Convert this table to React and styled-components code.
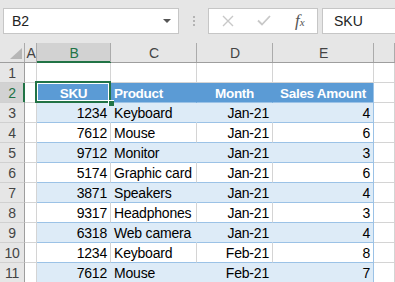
import styled, { createGlobalStyle, css } from "styled-components"

const GlobalStyle = createGlobalStyle`
  html, body {
    margin: 0;
    padding: 0;
    background: #e6e6e6;
    overflow: hidden;
  }
  body {
    font-family: "Liberation Sans", Arial, sans-serif;
  }
`

const Window = styled.div`
  width: 395px;
  height: 282px;
  overflow: hidden;
  background: #e6e6e6;
`

const FormulaBar = styled.div`
  display: flex;
  align-items: center;
  height: 43px;
  padding: 0 0 0 3px;
  box-sizing: border-box;
`

const NameBox = styled.div`
  display: flex;
  align-items: center;
  justify-content: space-between;
  width: 176px;
  height: 26px;
  margin-top: -2px;
  box-sizing: border-box;
  background: #fff;
  border: 1px solid #c6c6c6;
  padding: 0 7px 0 8px;
  font-size: 14px;
  color: #222;
`

const Caret = styled.span`
  width: 0;
  height: 0;
  border-left: 4px solid transparent;
  border-right: 4px solid transparent;
  border-top: 4px solid #555;
`

const Dots = styled.div`
  display: flex;
  flex-direction: column;
  gap: 2px;
  margin: -2px 13px 0 14px;
  span {
    width: 2px;
    height: 2px;
    background: #b4b4b4;
  }
`

const ActionBox = styled.div`
  display: flex;
  align-items: center;
  width: 110px;
  height: 26px;
  margin-top: -2px;
  box-sizing: border-box;
  background: #fff;
  border: 1px solid #c6c6c6;
  padding-left: 13px;
  gap: 23px;
`

const Fx = styled.span`
  font-family: "Liberation Serif", "Times New Roman", serif;
  font-style: italic;
  font-size: 17px;
  color: #555;
  margin-left: 1px;
  sub {
    font-size: 11px;
    vertical-align: 0;
  }
`

const FormulaInput = styled.div`
  flex: 1;
  height: 26px;
  margin: -2px 0 0 4px;
  box-sizing: border-box;
  background: #fff;
  border: 1px solid #c6c6c6;
  border-right: none;
  padding-left: 11px;
  display: flex;
  align-items: center;
  font-size: 14px;
  color: #222;
`

const Sheet = styled.div`
  display: grid;
  grid-template-columns: 25px 12px 74px 86px 76px 101px 1fr;
  grid-auto-rows: 20px;
  font-size: 14px;
  letter-spacing: -0.2px;
`

const Cell = styled.div`
  box-sizing: border-box;
  display: flex;
  align-items: center;
  padding: 1px 3px 0;
  white-space: nowrap;
  overflow: visible;
  background: #fff;
  color: #000;
  border-right: 1px solid #d4d4d4;
  border-bottom: 1px solid #d4d4d4;
  justify-content: ${p => p.$align === "right" ? "flex-end" : p.$align === "center" ? "center" : "flex-start"};
  ${p => p.$band === "head" && css`
    background: #5b9bd5;
    color: #fff;
    font-weight: bold;
    font-size: 13.5px;
    letter-spacing: -0.3px;
    border-right-color: #5b9bd5;
    border-bottom-color: #9bc2e6;
  `}
  ${p => p.$band === "odd" && css`
    background: #ddebf7;
    border-right-color: #ddebf7;
    border-bottom-color: #9bc2e6;
  `}
  ${p => p.$band === "even" && css`
    border-bottom-color: #9bc2e6;
  `}
  ${p => p.$last && css`
    border-right-color: #9bc2e6;
  `}
  ${p => p.$selected && css`
    position: relative;
    &::before {
      content: "";
      position: absolute;
      left: -2px;
      top: -2px;
      right: -1px;
      bottom: -1px;
      border: 2px solid #217346;
      box-shadow: inset 0 0 0 1px #fff;
      z-index: 2;
    }
    &::after {
      content: "";
      position: absolute;
      right: -4px;
      bottom: -4px;
      width: 5px;
      height: 5px;
      background: #217346;
      border: 1px solid #fff;
      border-right: none;
      border-bottom: none;
      z-index: 3;
    }
  `}
`

const ColHead = styled.div`
  box-sizing: border-box;
  display: flex;
  align-items: center;
  justify-content: center;
  padding-top: 1px;
  background: ${p => p.$active ? "#d2d2d2" : "#e6e6e6"};
  border-bottom: 1px solid ${p => p.$active ? "#217346" : "#9e9e9e"};
  box-shadow: ${p => p.$active ? "inset 0 -1px 0 #217346" : "none"};
  position: relative;
  color: ${p => p.$active ? "#217346" : "#444"};
  &::after {
    content: "";
    position: absolute;
    right: 0;
    top: 0;
    bottom: 0;
    width: 1px;
    background: #ababab;
  }
`

const Corner = styled(ColHead)`
  &::before {
    content: "";
    position: absolute;
    right: 3px;
    bottom: 3px;
    width: 0;
    height: 0;
    border-left: 12px solid transparent;
    border-bottom: 11px solid #b6b6b6;
  }
`

const RowHead = styled.div`
  box-sizing: border-box;
  display: flex;
  align-items: center;
  justify-content: center;
  padding-top: 1px;
  background: ${p => p.$active ? "#d2d2d2" : "#e6e6e6"};
  color: ${p => p.$active ? "#217346" : "#444"};
  border-bottom: 1px solid #d0d0d0;
  border-right: 1px solid ${p => p.$active ? "#217346" : "#9e9e9e"};
  box-shadow: ${p => p.$active ? "inset -1px 0 0 #217346" : "none"};
`

const rows = [
  ["1234", "Keyboard", "Jan-21", "4"],
  ["7612", "Mouse", "Jan-21", "6"],
  ["9712", "Monitor", "Jan-21", "3"],
  ["5174", "Graphic card", "Jan-21", "6"],
  ["3871", "Speakers", "Jan-21", "4"],
  ["9317", "Headphones", "Jan-21", "3"],
  ["6318", "Web camera", "Jan-21", "4"],
  ["1234", "Keyboard", "Feb-21", "8"],
  ["7612", "Mouse", "Feb-21", "7"],
]

const XIcon = () => (
  <svg width="12" height="12" viewBox="0 0 12 12">
    <path d="M1 1 L11 11 M11 1 L1 11" stroke="#c8c8c8" strokeWidth="1.4" fill="none" />
  </svg>
)

const CheckIcon = () => (
  <svg width="14" height="11" viewBox="0 0 14 11">
    <path d="M1 5.5 L5 9.5 L13 1" stroke="#c8c8c8" strokeWidth="1.8" fill="none" />
  </svg>
)

const App = () => {
  return (
    <Window>
      <GlobalStyle />
      <FormulaBar>
        <NameBox>
          <span>B2</span>
          <Caret />
        </NameBox>
        <Dots><span /><span /><span /></Dots>
        <ActionBox>
          <XIcon />
          <CheckIcon />
          <Fx>f<sub>x</sub></Fx>
        </ActionBox>
        <FormulaInput>SKU</FormulaInput>
      </FormulaBar>
      <Sheet>
        <Corner />
        <ColHead>A</ColHead>
        <ColHead $active>B</ColHead>
        <ColHead>C</ColHead>
        <ColHead>D</ColHead>
        <ColHead>E</ColHead>
        <ColHead />

        <RowHead>1</RowHead>
        <Cell /><Cell /><Cell /><Cell /><Cell /><Cell />

        <RowHead $active>2</RowHead>
        <Cell />
        <Cell $band="head" $align="center" $selected>SKU</Cell>
        <Cell $band="head">Product</Cell>
        <Cell $band="head" $align="center">Month</Cell>
        <Cell $band="head" $align="center" $last>Sales Amount</Cell>
        <Cell />

        {rows.map((r, i) => {
          const band = i % 2 === 0 ? "odd" : "even"
          return [
            <RowHead key={`h${i}`}>{i + 3}</RowHead>,
            <Cell key={`a${i}`} />,
            <Cell key={`b${i}`} $band={band} $align="right">{r[0]}</Cell>,
            <Cell key={`c${i}`} $band={band}>{r[1]}</Cell>,
            <Cell key={`d${i}`} $band={band} $align="right">{r[2]}</Cell>,
            <Cell key={`e${i}`} $band={band} $align="right" $last>{r[3]}</Cell>,
            <Cell key={`f${i}`} />,
          ]
        })}
      </Sheet>
    </Window>
  )
}

export default App
